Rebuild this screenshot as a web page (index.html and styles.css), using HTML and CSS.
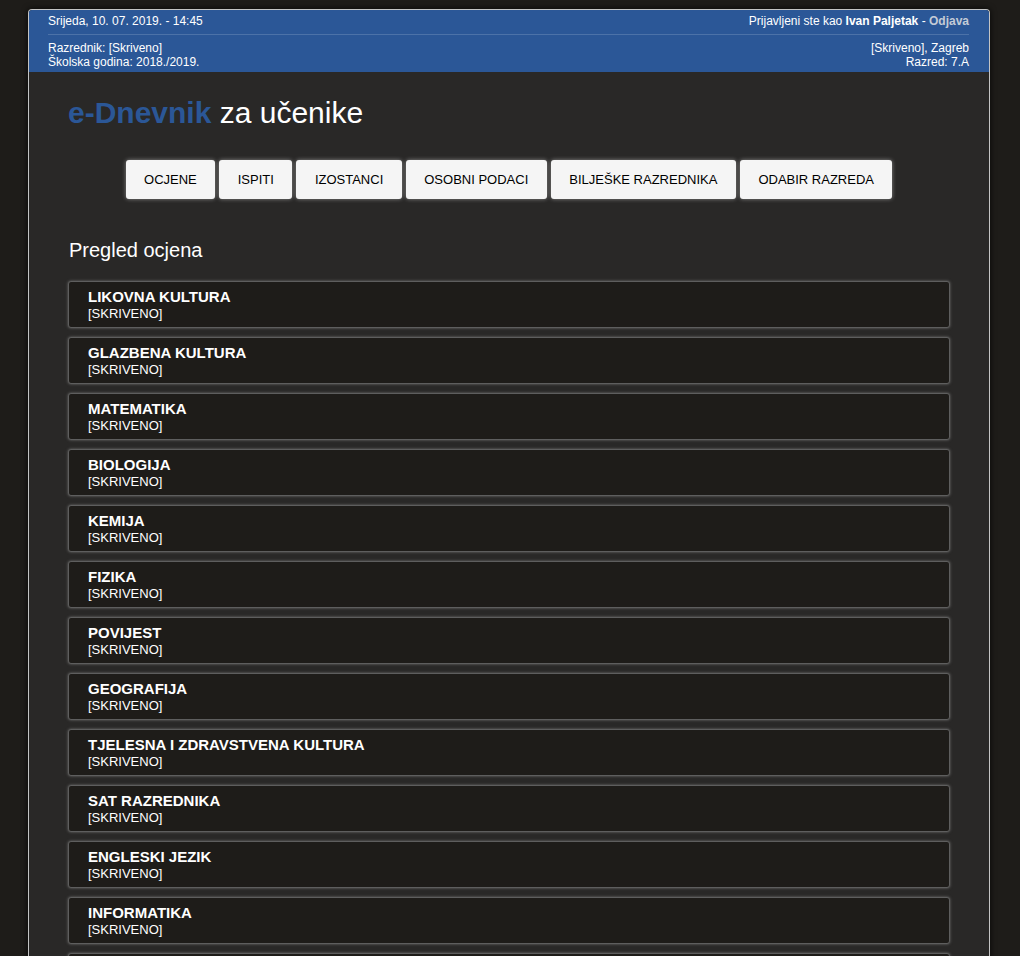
FILE: index.html
```html
<!DOCTYPE html>
<html lang="hr">
<head>
<meta charset="utf-8">
<title>e-Dnevnik za učenike</title>
<link rel="stylesheet" href="styles.css">
</head>
<body>
<div class="page">
  <header class="topbar">
    <div class="topbar-row topbar-first">
      <div>Srijeda, 10. 07. 2019. - 14:45</div>
      <div>Prijavljeni ste kao <b>Ivan Paljetak</b> - <a class="logout" href="#">Odjava</a></div>
    </div>
    <div class="topbar-row topbar-second">
      <div>Razrednik: [Skriveno]<br>Školska godina: 2018./2019.</div>
      <div class="right">[Skriveno], Zagreb<br>Razred: 7.A</div>
    </div>
  </header>
  <main class="content">
    <h1 class="title"><span class="brand">e-Dnevnik</span> za učenike</h1>
    <nav class="nav">
      <a class="nav-btn" href="#">OCJENE</a>
      <a class="nav-btn" href="#">ISPITI</a>
      <a class="nav-btn" href="#">IZOSTANCI</a>
      <a class="nav-btn" href="#">OSOBNI PODACI</a>
      <a class="nav-btn" href="#">BILJEŠKE RAZREDNIKA</a>
      <a class="nav-btn" href="#">ODABIR RAZREDA</a>
    </nav>
    <h2 class="section-title">Pregled ocjena</h2>
    <ul class="courses">
      <li class="course"><div class="course-name">LIKOVNA KULTURA</div><div class="course-prof">[SKRIVENO]</div></li>
      <li class="course"><div class="course-name">GLAZBENA KULTURA</div><div class="course-prof">[SKRIVENO]</div></li>
      <li class="course"><div class="course-name">MATEMATIKA</div><div class="course-prof">[SKRIVENO]</div></li>
      <li class="course"><div class="course-name">BIOLOGIJA</div><div class="course-prof">[SKRIVENO]</div></li>
      <li class="course"><div class="course-name">KEMIJA</div><div class="course-prof">[SKRIVENO]</div></li>
      <li class="course"><div class="course-name">FIZIKA</div><div class="course-prof">[SKRIVENO]</div></li>
      <li class="course"><div class="course-name">POVIJEST</div><div class="course-prof">[SKRIVENO]</div></li>
      <li class="course"><div class="course-name">GEOGRAFIJA</div><div class="course-prof">[SKRIVENO]</div></li>
      <li class="course"><div class="course-name">TJELESNA I ZDRAVSTVENA KULTURA</div><div class="course-prof">[SKRIVENO]</div></li>
      <li class="course"><div class="course-name">SAT RAZREDNIKA</div><div class="course-prof">[SKRIVENO]</div></li>
      <li class="course"><div class="course-name">ENGLESKI JEZIK</div><div class="course-prof">[SKRIVENO]</div></li>
      <li class="course"><div class="course-name">INFORMATIKA</div><div class="course-prof">[SKRIVENO]</div></li>
      <li class="course course-empty"></li>
    </ul>
  </main>
</div>
</body>
</html>
```

FILE: styles.css
```css
* { box-sizing: border-box; }

body {
  margin: 0;
  background: #1e1c19;
  font-family: "Liberation Sans", Arial, sans-serif;
  color: #fff;
}

.page {
  width: 962px;
  margin: 9px 0 0 28px;
  background: #292827;
  border: 1px solid #c4c4c4;
  border-bottom: none;
  border-radius: 4px 4px 0 0;
  box-shadow: 0 0 6px rgba(0, 0, 0, 0.8);
  overflow: hidden;
}

.topbar {
  background: #2b5797;
  padding: 4px 20px 3px 19px;
  font-size: 12px;
  line-height: 14px;
}

.topbar-row {
  display: flex;
  justify-content: space-between;
}

.topbar-first {
  padding-bottom: 6px;
  border-bottom: 1px solid #4c72a8;
}

.topbar-second {
  padding-top: 6px;
}

.right { text-align: right; }

.logout {
  color: #c3cbd6;
  text-decoration: none;
  font-weight: bold;
}

.content {
  padding: 24px 39px 40px;
}

.title {
  margin: 0;
  font-size: 30px;
  font-weight: normal;
  line-height: 34px;
  color: #fff;
}

.brand {
  color: #2b5797;
  font-weight: bold;
}

.nav {
  display: flex;
  justify-content: center;
  gap: 4px;
  margin-top: 30px;
}

.nav-btn {
  display: block;
  background: #f5f5f5;
  color: #000;
  text-decoration: none;
  font-size: 13px;
  line-height: 15px;
  padding: 12px 18.5px;
  border-radius: 3px;
  box-shadow: 0 0 4px rgba(255, 255, 255, 0.45);
}

.section-title {
  margin: 40px 0 19px 1px;
  font-size: 20px;
  font-weight: normal;
  line-height: 23px;
}

.courses {
  list-style: none;
  margin: 0;
  padding: 0;
  display: flex;
  flex-direction: column;
  gap: 9px;
}

.course {
  background: #1e1c19;
  border: 1px solid #5e5e5e;
  border-radius: 3px;
  box-shadow: 0 0 3px rgba(160, 160, 160, 0.6);
  padding: 6px 19px 6px;
  height: 47px;
}

.course-name {
  font-size: 15px;
  font-weight: bold;
  line-height: 18px;
}

.course-prof {
  font-size: 13px;
  line-height: 15px;
}
```
